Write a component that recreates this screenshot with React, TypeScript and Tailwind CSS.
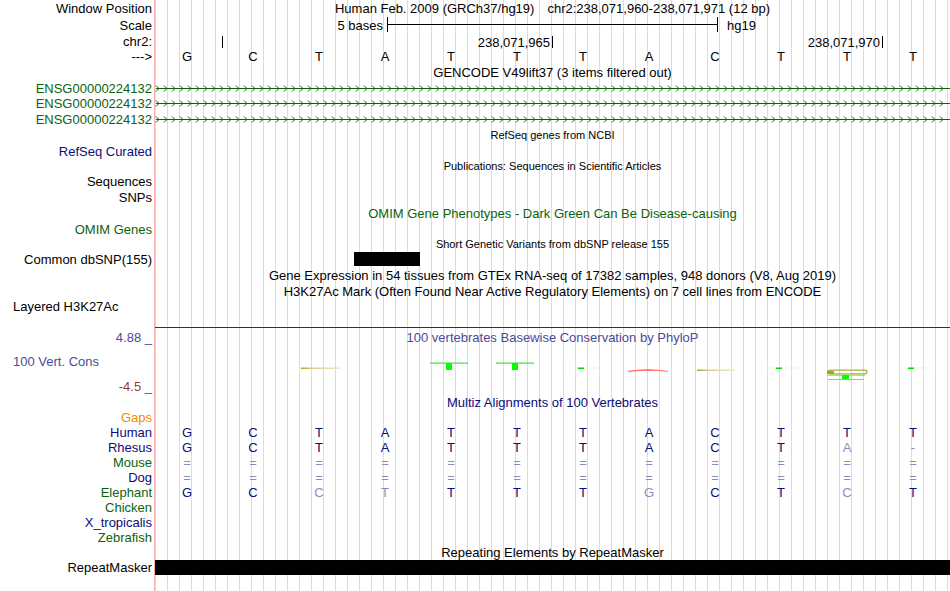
import React from 'react';

// light lavender guide lines every 12px across the data area
const guides =
  'bg-[repeating-linear-gradient(90deg,#d8d8f2_0px,#d8d8f2_1px,transparent_1px,transparent_12px)]';

const GREEN = '#0b640b';

type RowProps = {
  h: string;
  label?: React.ReactNode;
  labelClass?: string;
  dataClass?: string;
  children?: React.ReactNode;
};

const Row: React.FC<RowProps> = ({ h, label, labelClass = 'text-black justify-end pr-[2px]', dataClass = '', children }) => (
  <>
    <div className={`${h} flex items-center whitespace-nowrap border-r border-[#f7b0b0] ${labelClass}`}>{label}</div>
    <div className={`${h} ${guides} relative overflow-hidden ${dataClass}`}>{children}</div>
  </>
);

const Title: React.FC<{ className?: string; children: React.ReactNode }> = ({ className = 'text-black', children }) => (
  <div className={`flex h-full items-center justify-center whitespace-nowrap ${className}`}>{children}</div>
);

type Base = { b: string; light?: boolean };

const Bases: React.FC<{ bases: Base[]; dark?: string }> = ({ bases, dark = 'text-[#0c0c78]' }) => (
  <div className="-ml-px grid h-full grid-cols-[repeat(12,66px)] items-center justify-items-center">
    {bases.map((x, i) => (
      <span key={i} className={x.light ? 'text-[#8c8cbc]' : dark}>
        {x.b}
      </span>
    ))}
  </div>
);

const seq = (s: string, lightIdx: number[] = []): Base[] =>
  s.split('').map((b, i) => ({ b, light: lightIdx.includes(i) }));

const GeneLine: React.FC<{ h: number }> = ({ h }) => {
  const y = Math.floor(h / 2) + 0.5;
  const d: string[] = [];
  for (let x = 3; x < 795; x += 8) d.push(`M${x - 2} ${y - 3}L${x + 1} ${y}L${x - 2} ${y + 3}`);
  return (
    <svg width="795" height={h} className="block">
      <line x1="1" x2="795" y1={y} y2={y} stroke={GREEN} strokeWidth="1" />
      <path d={d.join('')} fill="none" stroke={GREEN} strokeWidth="1" />
    </svg>
  );
};

const ConsChart: React.FC = () => (
  <svg width="795" height="49" className="block">
    <defs>
      <linearGradient id="olive" x1="0" x2="1">
        <stop offset="0" stopColor="#b0a420" />
        <stop offset="0.3" stopColor="#d8d290" />
        <stop offset="1" stopColor="#ece8c4" />
      </linearGradient>
      <linearGradient id="faint" x1="0" x2="1">
        <stop offset="0" stopColor="#eefaee" />
        <stop offset="1" stopColor="#e4f6e4" />
      </linearGradient>
      <linearGradient id="red" x1="0" x2="1">
        <stop offset="0" stopColor="#ff8080" />
        <stop offset="0.5" stopColor="#ff5050" />
        <stop offset="1" stopColor="#ffa0a0" />
      </linearGradient>
    </defs>
    {/* base 3 */}
    <rect x="146" y="21.5" width="39" height="1.5" fill="url(#olive)" />
    {/* base 5 */}
    <rect x="275" y="16.5" width="38" height="1.2" fill="#44dd44" />
    <rect x="291" y="17" width="6" height="7" fill="#00ff00" />
    {/* base 6 */}
    <rect x="341" y="16.5" width="38" height="1.2" fill="#44dd44" />
    <rect x="357" y="17" width="6" height="7" fill="#00ff00" />
    {/* base 7 */}
    <rect x="407" y="21.5" width="38" height="1" fill="url(#faint)" />
    <rect x="423" y="21.5" width="6" height="1.5" fill="#00dd00" />
    {/* base 8 */}
    <path d="M473 25.5 Q493 22.5 513 25.5" fill="none" stroke="url(#red)" strokeWidth="1.6" />
    {/* base 9 */}
    <rect x="542" y="23.5" width="38" height="1.5" fill="url(#olive)" />
    {/* base 10 */}
    <rect x="605" y="21.5" width="38" height="1" fill="url(#faint)" />
    <rect x="621" y="21.5" width="6" height="1.5" fill="#00dd00" />
    {/* base 11 */}
    <rect x="673" y="24.2" width="39" height="3.6" rx="1.8" fill="none" stroke="#b4ac2c" strokeWidth="1.3" />
    <rect x="672" y="25" width="7" height="3" fill="#aea21a" />
    <rect x="672" y="28.7" width="38" height="1" fill="#6ae06a" />
    <rect x="687" y="29" width="7" height="4" fill="#00ff00" />
    <rect x="673" y="33" width="36" height="1" fill="#ff9090" />
    {/* base 12 */}
    <rect x="737" y="21.5" width="38" height="1" fill="url(#faint)" />
    <rect x="753" y="21.5" width="6" height="1.5" fill="#00dd00" />
  </svg>
);

const App: React.FC = () => {
  const navy = 'text-[#0c0c78] justify-end pr-[2px]';
  const green = 'text-[#0b640b] justify-end pr-[2px]';

  return (
    <div className="h-[591px] w-[950px] overflow-hidden bg-white font-['Liberation_Sans',Arial,sans-serif] text-[13px] leading-none text-black">
      <div className="grid grid-cols-[155px_795px]">
        <Row h="h-[17px]" label="Window Position">
          <div className="flex h-full items-center justify-center gap-[13px] whitespace-nowrap">
            <span>Human Feb. 2009 (GRCh37/hg19)</span>
            <span>chr2:238,071,960-238,071,971 (12 bp)</span>
          </div>
        </Row>
        <Row h="h-[17px]" label="Scale">
          <div className="grid h-full grid-cols-[232px_331px_1fr] items-center">
            <span className="justify-self-end pr-[4px]">5 bases</span>
            <div className="flex h-[15px] items-center self-start border-x border-black">
              <div className="h-px w-full bg-black" />
            </div>
            <span className="pl-[9px]">hg19</span>
          </div>
        </Row>
        <Row h="h-[15px]" label="chr2:">
          <div className="flex h-full items-end pb-px">
            <div className="h-[12px] w-[68px] shrink-0 border-r border-black" />
            <div className="flex h-[12px] w-[330px] shrink-0 items-center justify-end border-r border-black pr-[2px]">238,071,965</div>
            <div className="flex h-[12px] w-[330px] shrink-0 items-center justify-end border-r border-black pr-[2px]">238,071,970</div>
          </div>
        </Row>
        <Row h="h-[15px]" label="--->">
          <Bases bases={seq('GCTATTTACTTT')} dark="text-black" />
        </Row>
        <Row h="h-[16px]">
          <Title>GENCODE V49lift37 (3 items filtered out)</Title>
        </Row>
        <Row h="h-[16px]" label="ENSG00000224132" labelClass={green}>
          <GeneLine h={16} />
        </Row>
        <Row h="h-[15px]" label="ENSG00000224132" labelClass={green}>
          <GeneLine h={15} />
        </Row>
        <Row h="h-[16px]" label="ENSG00000224132" labelClass={green}>
          <GeneLine h={16} />
        </Row>
        <Row h="h-[16px]">
          <Title className="text-[11px] text-black">RefSeq genes from NCBI</Title>
        </Row>
        <Row h="h-[16px]" label="RefSeq Curated" labelClass={navy} />
        <Row h="h-[15px]">
          <Title className="text-[11px] text-black">Publications: Sequences in Scientific Articles</Title>
        </Row>
        <Row h="h-[15px]" label="Sequences" />
        <Row h="h-[16px]" label="SNPs" />
        <Row h="h-[17px]">
          <Title className="text-[#0b640b]">OMIM Gene Phenotypes - Dark Green Can Be Disease-causing</Title>
        </Row>
        <Row h="h-[15px]" label="OMIM Genes" labelClass={green} />
        <Row h="h-[15px]">
          <Title className="text-[11px] text-black">Short Genetic Variants from dbSNP release 155</Title>
        </Row>
        <Row h="h-[15px]" label="Common dbSNP(155)">
          <div className="ml-[199px] h-[14px] w-[66px] bg-black" />
        </Row>
        <Row h="h-[16px]">
          <Title>Gene Expression in 54 tissues from GTEx RNA-seq of 17382 samples, 948 donors (V8, Aug 2019)</Title>
        </Row>
        <Row h="h-[16px]">
          <Title>H3K27Ac Mark (Often Found Near Active Regulatory Elements) on 7 cell lines from ENCODE</Title>
        </Row>
        <Row h="h-[15px]" label="Layered H3K27Ac" labelClass="text-black pl-[13px]" />
        <Row h="h-[14px]" dataClass="border-b border-[#30303c]" />

        {/* conservation */}
        <div className="flex h-[67px] flex-col border-r border-[#f7b0b0] whitespace-nowrap">
          <div className="flex h-[18px] items-center justify-end pr-[2px] text-[#4b4b96]">4.88 _</div>
          <div className="flex h-[31px] items-center pl-[13px] text-[#4b4b96]">100 Vert. Cons</div>
          <div className="flex h-[18px] items-center justify-end pr-[2px] text-[#963c3c]">-4.5 _</div>
        </div>
        <div className={`h-[67px] ${guides}`}>
          <div className="h-[18px]">
            <Title className="text-[#4b4b96]">100 vertebrates Basewise Conservation by PhyloP</Title>
          </div>
          <ConsChart />
        </div>

        <Row h="h-[15px]">
          <Title className="text-[#0c0c78]">Multiz Alignments of 100 Vertebrates</Title>
        </Row>
        <Row h="h-[15px]" label="Gaps" labelClass="text-[#f08c00] justify-end pr-[2px]" />
        <Row h="h-[15px]" label="Human" labelClass={navy}>
          <Bases bases={seq('GCTATTTACTTT')} />
        </Row>
        <Row h="h-[15px]" label="Rhesus" labelClass={navy}>
          <Bases bases={seq('GCTATTTACTA-', [10, 11])} />
        </Row>
        <Row h="h-[15px]" label="Mouse" labelClass={green}>
          <Bases bases={seq('============', [0, 1, 2, 3, 4, 5, 6, 7, 8, 9, 10, 11])} />
        </Row>
        <Row h="h-[15px]" label="Dog" labelClass={navy}>
          <Bases bases={seq('============', [0, 1, 2, 3, 4, 5, 6, 7, 8, 9, 10, 11])} />
        </Row>
        <Row h="h-[15px]" label="Elephant" labelClass={green}>
          <Bases bases={seq('GCCTTTTGCTCT', [2, 3, 7, 10])} />
        </Row>
        <Row h="h-[15px]" label="Chicken" labelClass={green} />
        <Row h="h-[15px]" label="X_tropicalis" labelClass={navy} />
        <Row h="h-[15px]" label="Zebrafish" labelClass={green} />
        <Row h="h-[15px]">
          <Title>Repeating Elements by RepeatMasker</Title>
        </Row>
        <Row h="h-[15px]" label="RepeatMasker">
          <div className="h-full w-full bg-black" />
        </Row>
        <Row h="h-[16px]" />
      </div>
    </div>
  );
};

export default App;
